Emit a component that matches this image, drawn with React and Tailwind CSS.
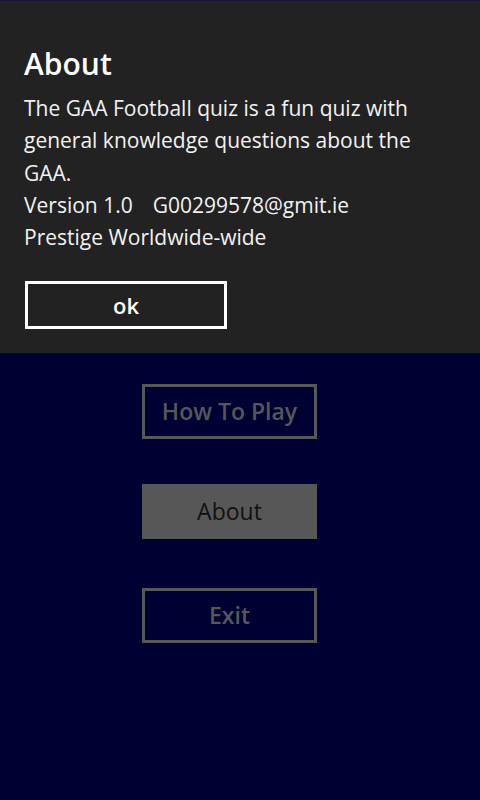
import React from 'react';

const App = () => {
  return (
    <div
      className="relative w-[480px] h-[800px] overflow-hidden bg-[#000033]"
      style={{ fontFamily: '"Open Sans", "Noto Sans", sans-serif' }}
    >
      {/* main menu behind the dialog */}
      <div className="flex flex-col pt-[384px] pl-[142px]">
        <button className="w-[175px] h-[55px] border-[3px] border-[#575757] text-[#575757] text-[23px] font-semibold">
          How To Play
        </button>
        <button className="mt-[45px] w-[175px] h-[55px] bg-[#575757] border-[3px] border-[#575757] text-[#111111] text-[23px] font-medium">
          About
        </button>
        <button className="mt-[49px] w-[175px] h-[55px] border-[3px] border-[#575757] text-[#575757] text-[23px] font-semibold">
          Exit
        </button>
      </div>

      {/* about dialog */}
      <div className="absolute top-0 left-0 w-full h-[353px] bg-[#222222] border-t border-[#16163a] pl-[24px] pt-[43px]">
        <h1 className="text-[30px] font-semibold text-white leading-[40px]">About</h1>
        <div className="mt-[8px] w-[420px] text-[21px] text-[#f2f2f2] leading-[32.3px]">
          <p>The GAA Football quiz is a fun quiz with general knowledge questions about the GAA.</p>
          <p>
            Version 1.0<span className="inline-block w-[20px]"></span>G00299578@gmit.ie
          </p>
          <p>Prestige Worldwide-wide</p>
        </div>
        <button className="mt-[28px] ml-[1px] w-[202px] h-[48px] border-[3px] border-white text-white text-[22px] font-semibold">
          ok
        </button>
      </div>
    </div>
  );
};

export default App;
